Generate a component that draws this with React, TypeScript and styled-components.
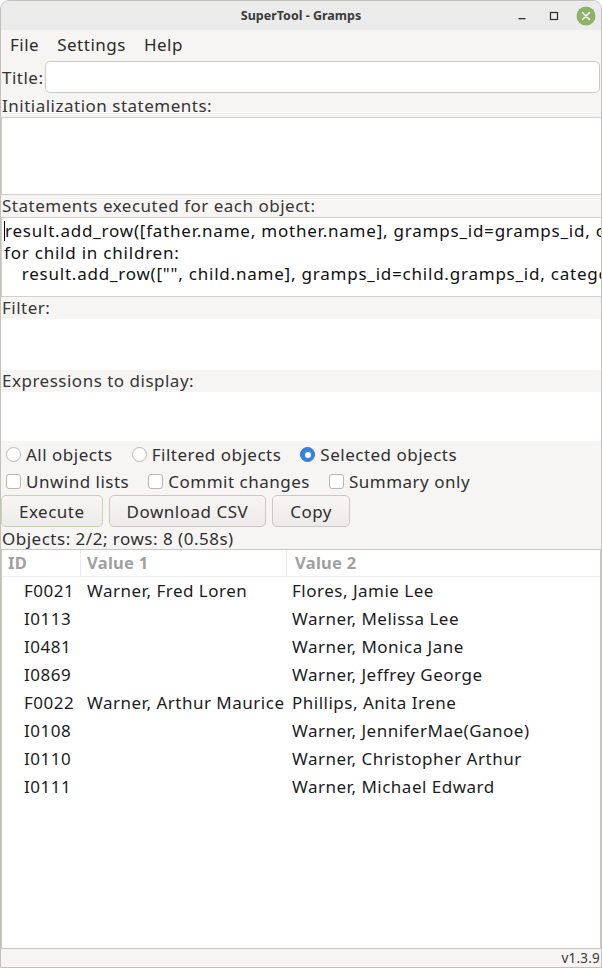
import React from "react";
import styled, { createGlobalStyle } from "styled-components";

const GlobalStyle = createGlobalStyle`
  html, body {
    margin: 0;
    padding: 0;
    background: #ffffff;
  }
  body {
    font-family: "Noto Sans", "DejaVu Sans", sans-serif;
  }
`;

const Window = styled.div`
  width: 602px;
  height: 968px;
  box-sizing: border-box;
  display: flex;
  flex-direction: column;
  background: #f6f5f4;
  border: 1px solid #c4c1bd;
  border-radius: 9px 9px 0 0;
  overflow: hidden;
  color: #2e2e2e;
  font-size: 17px;
  letter-spacing: 0.5px;
`;

const TitleBar = styled.div`
  height: 29px;
  flex: none;
  display: flex;
  align-items: center;
  justify-content: center;
  position: relative;
  background: #ebebeb;
  letter-spacing: 0;
`;

const WindowTitle = styled.div`
  font-size: 12.5px;
  font-weight: bold;
  color: #3a3a3a;
`;

const Controls = styled.div`
  position: absolute;
  right: 5px;
  top: 5px;
  display: flex;
  align-items: center;
  gap: 12px;
`;

const CtlButton = styled.div`
  width: 20px;
  height: 20px;
  display: flex;
  align-items: center;
  justify-content: center;
`;

const MenuBar = styled.div`
  height: 29px;
  flex: none;
  display: flex;
  align-items: center;
  gap: 18px;
  padding-left: 9px;
  color: #2a2a2a;
`;

const TitleRow = styled.div`
  height: 36px;
  flex: none;
  display: flex;
  align-items: center;
  gap: 1px;
  padding: 0 1px;
`;

const FieldLabel = styled.span`
  color: #333333;
`;

const TitleInput = styled.div`
  flex: 1;
  height: 32px;
  box-sizing: border-box;
  background: #ffffff;
  border: 1px solid #cdc7c2;
  border-radius: 5px;
`;

const SectionLabel = styled.div`
  height: 22px;
  flex: none;
  line-height: 22px;
  padding-left: 1px;
  color: #363636;
`;

const Pane = styled.div<{ $h: number; $framed?: boolean }>`
  height: ${(p) => p.$h}px;
  flex: none;
  box-sizing: border-box;
  background: #ffffff;
  border-top: ${(p) => (p.$framed ? "1px solid #d4cfca" : "none")};
  border-bottom: ${(p) => (p.$framed ? "1px solid #d4cfca" : "none")};
  border-left: ${(p) => (p.$framed ? "1px solid #d4cfca" : "none")};
  overflow: hidden;
`;

const Code = styled.div`
  padding: 2px 0 0 2px;
  line-height: 21.5px;
  letter-spacing: 0.78px;
  color: #111111;
  white-space: pre;
`;

const Indent = styled.span`
  letter-spacing: 0;
`;

const Caret = styled.span`
  display: inline-block;
  width: 0;
  height: 20px;
  border-left: 1px solid #000000;
  vertical-align: -4px;
`;

const OptionRow = styled.div<{ $h: number }>`
  height: ${(p) => p.$h}px;
  flex: none;
  display: flex;
  align-items: center;
  gap: 19px;
  padding-left: 5px;
  color: #303030;
`;

const Option = styled.label`
  display: flex;
  align-items: center;
  gap: 5px;
`;

const Radio = styled.span<{ $on?: boolean }>`
  width: 15px;
  height: 15px;
  box-sizing: border-box;
  border-radius: 50%;
  display: flex;
  align-items: center;
  justify-content: center;
  background: ${(p) => (p.$on ? "#3584e4" : "#ffffff")};
  border: 1px solid ${(p) => (p.$on ? "#2f76cf" : "#bcb6b0")};
  &::after {
    content: "";
    width: 6px;
    height: 6px;
    border-radius: 50%;
    background: #ffffff;
    display: ${(p) => (p.$on ? "block" : "none")};
  }
`;

const Check = styled.span`
  width: 15px;
  height: 15px;
  box-sizing: border-box;
  border-radius: 3px;
  background: #ffffff;
  border: 1px solid #bcb6b0;
`;

const ButtonRow = styled.div`
  height: 34px;
  flex: none;
  display: flex;
  align-items: center;
  gap: 5px;
`;

const Button = styled.button<{ $focus?: boolean }>`
  height: 32px;
  padding: 0 17px;
  font-family: inherit;
  font-size: 17px;
  letter-spacing: 0.5px;
  color: #2e2e2e;
  background: linear-gradient(#f7f6f5, #edebe9);
  border: 1px solid ${(p) => (p.$focus ? "#bfd6ae" : "#cdc7c2")};
  border-radius: 5px;
  & + & {
    margin-left: 1px;
  }
`;

const StatusText = styled.div`
  height: 21px;
  flex: none;
  line-height: 21px;
  padding-left: 1px;
  color: #303030;
`;

const Table = styled.div`
  flex: 1;
  background: #ffffff;
  border: 1px solid #cdc7c2;
  border-bottom: none;
  overflow: hidden;
`;

const Grid = styled.div`
  display: grid;
  grid-template-columns: 79px 206px 1fr;
`;

const HeadCell = styled.div<{ $last?: boolean }>`
  height: 26px;
  line-height: 26px;
  padding-left: ${(p) => (p.$last ? 8 : 6)}px;
  font-size: 16.5px;
  font-weight: bold;
  letter-spacing: 0.3px;
  color: #a0a0a0;
  border-right: ${(p) => (p.$last ? "none" : "1px solid #ebebeb")};
  border-bottom: 1px solid #f0f0f0;
`;

const Cell = styled.div<{ $pad: number }>`
  height: 28px;
  line-height: 28px;
  padding-left: ${(p) => p.$pad}px;
  color: #1c1c1c;
  white-space: nowrap;
`;

const Footer = styled.div`
  height: 18px;
  flex: none;
  display: flex;
  align-items: center;
  justify-content: flex-end;
  border-top: 1px solid #cdc7c2;
  font-size: 13.5px;
  letter-spacing: 0.2px;
  color: #3a3a3a;
  padding-right: 1px;
`;

const rows = [
  ["F0021", "Warner, Fred Loren", "Flores, Jamie Lee"],
  ["I0113", "", "Warner, Melissa Lee"],
  ["I0481", "", "Warner, Monica Jane"],
  ["I0869", "", "Warner, Jeffrey George"],
  ["F0022", "Warner, Arthur Maurice", "Phillips, Anita Irene"],
  ["I0108", "", "Warner, JenniferMae(Ganoe)"],
  ["I0110", "", "Warner, Christopher Arthur"],
  ["I0111", "", "Warner, Michael Edward"],
];

export default function App() {
  return (
    <>
      <GlobalStyle />
      <Window>
        <TitleBar>
          <WindowTitle>SuperTool - Gramps</WindowTitle>
          <Controls>
            <CtlButton>
              <svg width="10" height="10" viewBox="0 0 10 10">
                <rect x="1.5" y="7" width="7" height="1.3" fill="#2e2e2e" />
              </svg>
            </CtlButton>
            <CtlButton>
              <svg width="10" height="10" viewBox="0 0 10 10">
                <rect x="1.5" y="1.5" width="7" height="7" fill="none" stroke="#2e2e2e" strokeWidth="1.2" />
              </svg>
            </CtlButton>
            <CtlButton>
              <svg width="20" height="20" viewBox="0 0 20 20">
                <circle cx="10" cy="10" r="9.5" fill="#8cb369" />
                <path d="M6.5 6.5 L13.5 13.5 M13.5 6.5 L6.5 13.5" stroke="#ffffff" strokeWidth="1.5" strokeLinecap="round" />
              </svg>
            </CtlButton>
          </Controls>
        </TitleBar>
        <MenuBar>
          <span>File</span>
          <span>Settings</span>
          <span>Help</span>
        </MenuBar>
        <TitleRow>
          <FieldLabel>Title:</FieldLabel>
          <TitleInput />
        </TitleRow>
        <SectionLabel>Initialization statements:</SectionLabel>
        <Pane $h={78} $framed />
        <SectionLabel>Statements executed for each object:</SectionLabel>
        <Pane $h={80} $framed>
          <Code>
            <Caret />
            {"result.add_row([father.name, mother.name], gramps_id=gramps_id, category=\"Family\")\n"}
            {"for child in children:\n"}
            <Indent>{"    "}</Indent>
            {"result.add_row([\"\", child.name], gramps_id=child.gramps_id, category=\"Person\")"}
          </Code>
        </Pane>
        <SectionLabel>Filter:</SectionLabel>
        <Pane $h={51} />
        <SectionLabel>Expressions to display:</SectionLabel>
        <Pane $h={49} />
        <OptionRow $h={27}>
          <Option>
            <Radio />
            All objects
          </Option>
          <Option>
            <Radio />
            Filtered objects
          </Option>
          <Option>
            <Radio $on />
            Selected objects
          </Option>
        </OptionRow>
        <OptionRow $h={26}>
          <Option>
            <Check />
            Unwind lists
          </Option>
          <Option>
            <Check />
            Commit changes
          </Option>
          <Option>
            <Check />
            Summary only
          </Option>
        </OptionRow>
        <ButtonRow>
          <Button $focus>Execute</Button>
          <Button>Download CSV</Button>
          <Button>Copy</Button>
        </ButtonRow>
        <StatusText>Objects: 2/2; rows: 8 (0.58s)</StatusText>
        <Table>
          <Grid>
            <HeadCell>ID</HeadCell>
            <HeadCell>Value 1</HeadCell>
            <HeadCell $last>Value 2</HeadCell>
            {rows.map((r) => (
              <React.Fragment key={r[0]}>
                <Cell $pad={22}>{r[0]}</Cell>
                <Cell $pad={6}>{r[1]}</Cell>
                <Cell $pad={5}>{r[2]}</Cell>
              </React.Fragment>
            ))}
          </Grid>
        </Table>
        <Footer>v1.3.9</Footer>
      </Window>
    </>
  );
}
